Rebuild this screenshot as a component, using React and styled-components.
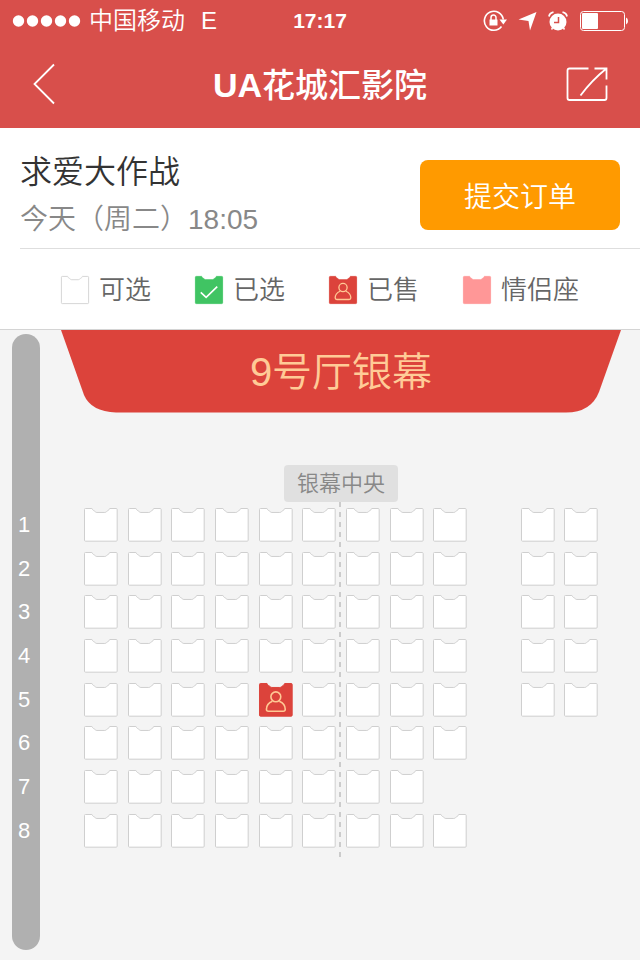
import React, { useState } from "react";
import styled, { createGlobalStyle, css } from "styled-components";

const GlobalStyle = createGlobalStyle`
  * { box-sizing: border-box; }
  body {
    margin: 0;
    background: #f4f4f4;
    font-family: "Liberation Sans", "Noto Sans CJK SC", sans-serif;
    font-weight: 350;
  }
  button { font: inherit; border: 0; padding: 0; background: none; cursor: pointer; }
  h1, h2, p, ul, ol { margin: 0; padding: 0; font-weight: inherit; }
  ul, ol { list-style: none; }
  svg { display: block; flex-shrink: 0; }
`;

const Page = styled.div`
  display: flex;
  flex-direction: column;
  min-height: 100vh;
`;

const Header = styled.header`
  background: #d84f4b;
  color: #fff;
`;

const StatusBar = styled.div`
  display: grid;
  grid-template-columns: 1fr auto 1fr;
  align-items: center;
  height: 40px;
  padding: 0 12px;
`;

const Carrier = styled.div`
  display: flex;
  align-items: center;
  padding-top: 1px;
  font-size: 24px;
  line-height: 40px;
`;

const SignalDots = styled.svg`
  margin-right: 8px;
`;

const Network = styled.span`
  margin-left: 16px;
`;

const Clock = styled.time`
  padding-top: 1px;
  font-size: 21px;
  font-weight: 700;
`;

const StatusIcons = styled.div`
  display: flex;
  align-items: center;
  justify-content: flex-end;
  gap: 11px;
`;

const NavBar = styled.nav`
  display: grid;
  grid-template-columns: 48px 1fr 48px;
  align-items: center;
  height: 88px;
  padding: 0 28px;
`;

const NavButton = styled.button`
  display: flex;
  align-items: center;
  justify-content: ${(p) => (p.$end ? "flex-end" : "flex-start")};
  height: 48px;
  padding: 0 4px;
  color: #fff;
`;

const Title = styled.h1`
  padding-top: 2px;
  font-size: 33px;
  font-weight: 500;
  line-height: 48px;
  text-align: center;
  white-space: nowrap;
`;

const Strong = styled.b`
  font-size: 34px;
  font-weight: 700;
`;

const Panel = styled.section`
  background: #fff;
  border-bottom: 1px solid #d4d4d4;
`;

const Showing = styled.div`
  display: flex;
  align-items: center;
  justify-content: space-between;
  margin-left: 20px;
  padding: 20px 20px 4px 0;
  border-bottom: 1px solid #dedede;
`;

const Movie = styled.h2`
  color: #333;
  font-size: 32px;
  line-height: 48px;
`;

const ShowTime = styled.p`
  color: #888;
  font-size: 28px;
  line-height: 48px;
`;

const SubmitButton = styled.button`
  width: 200px;
  height: 70px;
  margin-bottom: 2px;
  border-radius: 8px;
  background: #ff9a00;
  color: #fff;
  font-size: 28px;
`;

const Legend = styled.ul`
  display: flex;
  align-items: center;
  justify-content: center;
  gap: 44px;
  height: 80px;
  padding-top: 2px;
`;

const LegendItem = styled.li`
  display: flex;
  align-items: center;
  gap: 10px;
  color: #666;
  font-size: 26px;
  line-height: 40px;
`;

const LegendIcon = styled.span`
  width: 28px;
  height: 28px;
`;

const Hall = styled.main`
  flex: 1;
  display: grid;
  grid-template-columns: 28px 1fr;
  grid-template-rows: auto auto 1fr;
  column-gap: 21px;
  padding: 0 19px 0 12px;
`;

const Rail = styled.div`
  grid-column: 1;
  grid-row: 1 / 4;
  margin: 4px 0 10px;
  border-radius: 14px;
  background: #b0b0b0;
`;

const RowNumbers = styled.ol`
  grid-column: 1;
  grid-row: 2;
  display: grid;
  grid-auto-rows: 1fr;
  row-gap: 10px;
  padding-right: 4px;
  color: #fff;
  font-size: 22px;
`;

const RowNumber = styled.li`
  display: flex;
  align-items: center;
  justify-content: center;
`;

const Front = styled.div`
  grid-column: 2;
  grid-row: 1;
  display: flex;
  flex-direction: column;
  align-items: center;
  padding-bottom: 6px;
`;

const Screen = styled.div`
  display: grid;
  align-self: stretch;
  height: 83px;
  margin-bottom: 52px;
`;

const ScreenShape = styled.svg`
  grid-area: 1 / 1;
  width: 100%;
  height: 83px;
`;

const ScreenName = styled.h2`
  grid-area: 1 / 1;
  z-index: 1;
  color: #ffcb97;
  font-size: 40px;
  line-height: 84px;
  text-align: center;
`;

const CenterLabel = styled.div`
  padding: 0 13px;
  border-radius: 4px;
  background: #e0e0e0;
  color: #888;
  font-size: 22px;
  line-height: 37px;
`;

const Seats = styled.div`
  grid-column: 2;
  grid-row: 2;
  display: grid;
  grid-template-columns: repeat(12, 1fr);
  gap: 10px;
  padding: 0 23px;
`;

const seatBox = css`
  aspect-ratio: 1;
  min-width: 0;
`;

const SeatButton = styled.button`
  ${seatBox}
`;

const Aisle = styled.span`
  ${seatBox}
`;

const SeatDrawing = styled.svg`
  width: 100%;
  height: 100%;
  overflow: visible;
`;

const CenterLine = styled.div`
  grid-column: 2;
  grid-row: 2;
  justify-self: center;
  width: 2px;
  margin: -6px 2px -12px 0;
  background: repeating-linear-gradient(#cccccc 0 5px, transparent 5px 10px);
  pointer-events: none;
`;

const seatColors = {
  free: { fill: "#fff", stroke: "#cecece" },
  chosen: { fill: "#40c463", stroke: "#40c463" },
  sold: { fill: "#dc433b", stroke: "#dc433b" },
  couple: { fill: "#ff9797", stroke: "#ff9797" },
};

function SeatIcon({ kind }) {
  const { fill, stroke } = seatColors[kind];
  return (
    <SeatDrawing viewBox="0 0 34 34" aria-hidden="true">
      <path
        d="M1.500.5H8C8.500.5 8.500 2 9.500 2.500C11 3 11.500 4.500 13 4.500H21C22.500 4.500 23 3 24.500 2.500C25.500 2 25.500.5 26 .5H32.500Q33.500.5 33.500 1.500V32.500Q33.500 33.500 32.500 33.500H1.500Q.5 33.500.5 32.500V1.500Q.5.5 1.500.5Z"
        fill={fill}
        stroke={stroke}
      />
      {kind === "chosen" && (
        <path d="M7 20L13.500 26L27 13" fill="none" stroke="#fff" strokeWidth="2" />
      )}
      {kind === "sold" && (
        <g fill="none" stroke="#ffc894" strokeWidth="1.600" strokeLinejoin="round">
          <circle cx="17" cy="14" r="5" />
          <path d="M13.500 18.500C10 20 7.500 23 7.500 26.500Q7.500 28.500 9.500 28.500H24.500Q26.500 28.500 26.500 26.500C26.500 23 24 20 20.500 18.500" />
        </g>
      )}
    </SeatDrawing>
  );
}

function LockIcon() {
  return (
    <svg width="24" height="22" viewBox="0 0 24 22" fill="none" aria-hidden="true">
      <path d="M18.500 16.500A9.500 9.500 0 1 1 20.300 9.500" stroke="#fff" strokeWidth="1.600" />
      <path d="M16.500 9.500H24L20.300 14.500Z" fill="#fff" />
      <path d="M6.500 9.500H14.500V15.500H6.500Z" fill="#fff" />
      <path d="M8 10V7.500A2.500 2.500 0 0 1 13 7.500V10" stroke="#fff" strokeWidth="1.500" />
    </svg>
  );
}

function LocationIcon() {
  return (
    <svg width="19" height="20" viewBox="0 0 19 20" aria-hidden="true">
      <path d="M18.500 1L12 19.500L10.500 10L.5 8.500Z" fill="#fff" />
    </svg>
  );
}

function AlarmIcon() {
  return (
    <svg width="20" height="20" viewBox="0 0 20 20" fill="none" aria-hidden="true">
      <circle cx="10" cy="11" r="8.500" fill="#fff" />
      <path d="M10.500 6V11.500H6" stroke="#d84f4b" strokeWidth="1.500" />
      <path d="M1 5.500Q1.500 2 5.500 1.200M19 5.500Q18.500 2 14.500 1.200" stroke="#fff" strokeWidth="1.800" />
      <path d="M4.500 17L3.500 18.500M15.500 17L16.500 18.500" stroke="#fff" strokeWidth="1.500" />
    </svg>
  );
}

function BatteryIcon() {
  return (
    <svg width="49" height="20" viewBox="0 0 49 20" fill="none" aria-hidden="true">
      <rect x="1.500" y=".5" width="44" height="19" rx="3" stroke="#fff" />
      <rect x="3" y="2" width="16" height="16" rx="1" fill="#fff" />
      <path d="M47 6.500Q49 7 49 10T47 13.500Z" fill="#fff" />
    </svg>
  );
}

const rows = [
  "#########.##",
  "#########.##",
  "#########.##",
  "#########.##",
  "####S####.##",
  "#########...",
  "########....",
  "#########...",
];

const legend = [
  ["free", "可选"],
  ["chosen", "已选"],
  ["sold", "已售"],
  ["couple", "情侣座"],
];

export default function App() {
  const [chosen, setChosen] = useState([]);
  const toggle = (id) =>
    setChosen((list) => (list.includes(id) ? list.filter((x) => x !== id) : [...list, id]));

  return (
    <Page>
      <GlobalStyle />
      <Header>
        <StatusBar>
          <Carrier>
            <SignalDots width="69" height="12" viewBox="0 0 69 12" fill="#fff" aria-hidden="true">
              {[6, 20, 34, 48, 62].map((x) => (
                <circle key={x} cx={x + 0.5} cy="6" r="5.700" />
              ))}
            </SignalDots>
            中国移动<Network>E</Network>
          </Carrier>
          <Clock>17:17</Clock>
          <StatusIcons>
            <LockIcon />
            <LocationIcon />
            <AlarmIcon />
            <BatteryIcon />
          </StatusIcons>
        </StatusBar>
        <NavBar>
          <NavButton aria-label="返回">
            <svg width="24" height="42" viewBox="0 0 24 42" fill="none" aria-hidden="true">
              <path d="M22 1.500L2.500 21L22 40.500" stroke="currentColor" strokeWidth="1.800" />
            </svg>
          </NavButton>
          <Title>
            <Strong>UA</Strong>花城汇影院
          </Title>
          <NavButton $end aria-label="分享">
            <svg width="42" height="34" viewBox="0 0 42 34" fill="none" aria-hidden="true">
              <path
                d="M22.500 1.500H3.500Q1.500 1.500 1.500 3.500V31Q1.500 33 3.500 33H38.500Q40.500 33 40.500 31V18.500M28.500 1.500H40.500V12.500M40.500 1.500Q26 13 14.500 28.500"
                stroke="currentColor"
                strokeWidth="1.800"
              />
            </svg>
          </NavButton>
        </NavBar>
      </Header>

      <Panel>
        <Showing>
          <div>
            <Movie>求爱大作战</Movie>
            <ShowTime>今天（周二）18:05</ShowTime>
          </div>
          <SubmitButton>提交订单</SubmitButton>
        </Showing>
        <Legend>
          {legend.map(([kind, label]) => (
            <LegendItem key={kind}>
              <LegendIcon>
                <SeatIcon kind={kind} />
              </LegendIcon>
              {label}
            </LegendItem>
          ))}
        </Legend>
      </Panel>

      <Hall>
        <Rail />
        <RowNumbers>
          {rows.map((_, i) => (
            <RowNumber key={i}>{i + 1}</RowNumber>
          ))}
        </RowNumbers>
        <Front>
          <Screen>
            <ScreenShape viewBox="0 0 560 83" preserveAspectRatio="none" aria-hidden="true">
              <path
                d="M0 0H560L538 62Q530 82.500 505 82.500H55Q30 81.500 23 65Z"
                fill="#dc433b"
              />
            </ScreenShape>
            <ScreenName>9号厅银幕</ScreenName>
          </Screen>
          <CenterLabel>银幕中央</CenterLabel>
        </Front>
        <Seats>
          {rows.flatMap((row, r) =>
            [...row].map((cell, c) => {
              const id = `${r + 1}-${c + 1}`;
              if (cell === ".") return <Aisle key={id} />;
              const kind = cell === "S" ? "sold" : chosen.includes(id) ? "chosen" : "free";
              return (
                <SeatButton
                  key={id}
                  aria-label={`${r + 1}排${c + 1}座`}
                  aria-pressed={kind === "chosen"}
                  disabled={kind === "sold"}
                  onClick={() => toggle(id)}
                >
                  <SeatIcon kind={kind} />
                </SeatButton>
              );
            })
          )}
        </Seats>
        <CenterLine />
      </Hall>
    </Page>
  );
}
